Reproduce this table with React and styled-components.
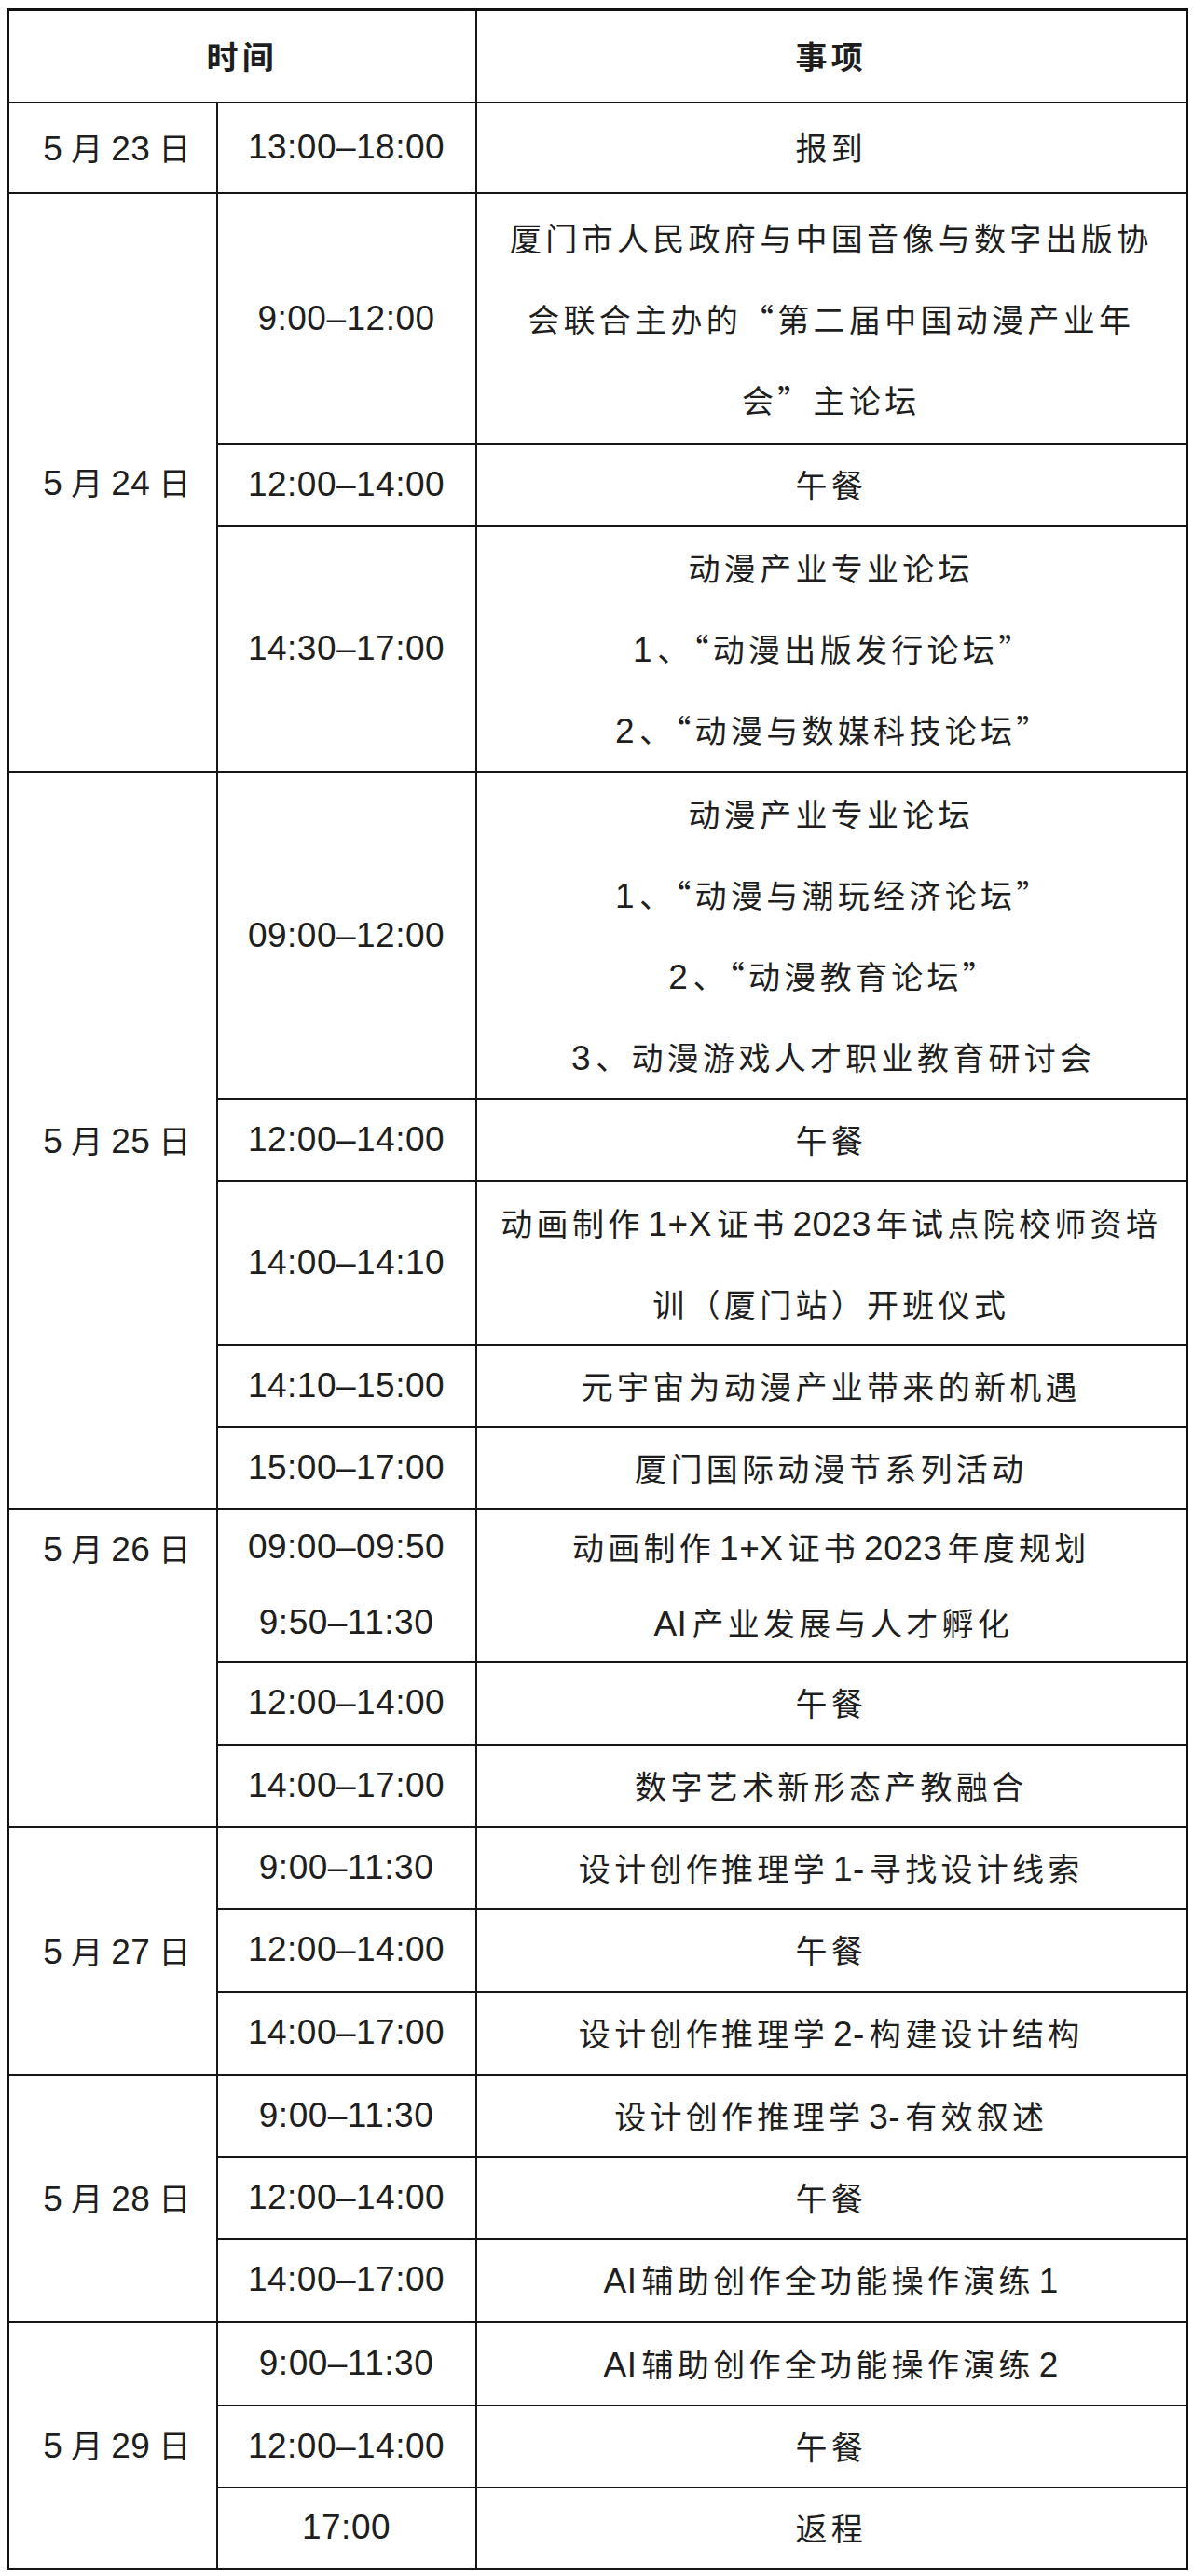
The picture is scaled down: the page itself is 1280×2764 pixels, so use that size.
import React from "react";
import styled, { createGlobalStyle, css } from "styled-components";

const GlobalStyle = createGlobalStyle`
  html, body {
    margin: 0;
    background: #fff;
  }
  body {
    font-family: "Noto Sans CJK SC", "Liberation Sans", sans-serif;
    color: #1e1e1e;
  }
`;

const Page = styled.div`
  padding: 9px 5px 6px 7px;
`;

const Schedule = styled.table`
  width: 1268px;
  table-layout: fixed;
  border-collapse: collapse;
  border: 3px solid #111;
`;

const cellBase = css`
  border: 2px solid #161616;
  padding: 0;
  text-align: center;
  vertical-align: middle;
  font-size: 34px;
  font-weight: 400;
  letter-spacing: 4.3px;
  line-height: 86px;
`;

const HeadCell = styled.th`
  ${cellBase}
  font-weight: 700;
`;

const DateCell = styled.td`
  ${cellBase}
  letter-spacing: 0;
  vertical-align: ${p => (p.$top ? "top" : "middle")};
  line-height: ${p => (p.$top ? "82px" : "86px")};
`;

const TimeCell = styled.td`
  ${cellBase}
  font-family: "Liberation Sans", Arial, sans-serif;
  font-size: 37px;
  letter-spacing: 0.5px;
  line-height: ${p => p.$lh}px;
  ${p => p.$open && "border-bottom-style: hidden;"}
`;

const TextCell = styled.td`
  ${cellBase}
  line-height: ${p => p.$lh}px;
  ${p => p.$open && "border-bottom-style: hidden;"}
`;

const Row = styled.tr`
  height: ${p => p.$h}px;
`;

const Line = styled.div`
  white-space: nowrap;
`;

const Latin = styled.span`
  font-family: "Liberation Sans", Arial, sans-serif;
  font-size: 37px;
  line-height: 1;
  letter-spacing: 0.5px;
  margin: 0 ${p => p.$gap}px;
`;

// wrap runs of latin letters / digits so they get the narrower western face
const mix = (text, gap = 5) =>
  text.split(/([0-9A-Za-z+\-]+)/).map((part, i) =>
    i % 2 ? <Latin key={i} $gap={gap}>{part}</Latin> : part
  );

const schedule = [
  {
    date: "5月23日",
    rows: [{ h: 97, time: "13:00–18:00", lines: ["报到"] }],
  },
  {
    date: "5月24日",
    rows: [
      {
        h: 269,
        time: "9:00–12:00",
        lines: [
          "厦门市人民政府与中国音像与数字出版协",
          "会联合主办的“第二届中国动漫产业年",
          "会”主论坛",
        ],
      },
      { h: 88, time: "12:00–14:00", lines: ["午餐"] },
      {
        h: 264,
        time: "14:30–17:00",
        lines: ["动漫产业专业论坛", "1、“动漫出版发行论坛”", "2、“动漫与数媒科技论坛”"],
      },
    ],
  },
  {
    date: "5月25日",
    rows: [
      {
        h: 351,
        time: "09:00–12:00",
        lines: [
          "动漫产业专业论坛",
          "1、“动漫与潮玩经济论坛”",
          "2、“动漫教育论坛”",
          "3、动漫游戏人才职业教育研讨会",
        ],
      },
      { h: 88, time: "12:00–14:00", lines: ["午餐"] },
      {
        h: 176,
        time: "14:00–14:10",
        lines: ["动画制作1+X证书2023年试点院校师资培", "训（厦门站）开班仪式"],
      },
      { h: 88, time: "14:10–15:00", lines: ["元宇宙为动漫产业带来的新机遇"] },
      { h: 88, time: "15:00–17:00", lines: ["厦门国际动漫节系列活动"] },
    ],
  },
  {
    date: "5月26日",
    top: true,
    rows: [
      { h: 82, open: true, time: "09:00–09:50", lines: ["动画制作1+X证书2023年度规划"] },
      { h: 82, time: "9:50–11:30", lines: ["AI产业发展与人才孵化"] },
      { h: 89, time: "12:00–14:00", lines: ["午餐"] },
      { h: 88, time: "14:00–17:00", lines: ["数字艺术新形态产教融合"] },
    ],
  },
  {
    date: "5月27日",
    rows: [
      { h: 88, time: "9:00–11:30", lines: ["设计创作推理学1-寻找设计线索"] },
      { h: 89, time: "12:00–14:00", lines: ["午餐"] },
      { h: 89, time: "14:00–17:00", lines: ["设计创作推理学2-构建设计结构"] },
    ],
  },
  {
    date: "5月28日",
    rows: [
      { h: 88, time: "9:00–11:30", lines: ["设计创作推理学3-有效叙述"] },
      { h: 88, time: "12:00–14:00", lines: ["午餐"] },
      { h: 89, time: "14:00–17:00", lines: ["AI辅助创作全功能操作演练1"] },
    ],
  },
  {
    date: "5月29日",
    rows: [
      { h: 90, time: "9:00–11:30", lines: ["AI辅助创作全功能操作演练2"] },
      { h: 88, time: "12:00–14:00", lines: ["午餐"] },
      { h: 88, time: "17:00", lines: ["返程"] },
    ],
  },
];

export default function App() {
  return (
    <Page>
      <GlobalStyle />
      <Schedule lang="zh-CN">
        <colgroup>
          <col style={{ width: 224 }} />
          <col style={{ width: 278 }} />
          <col />
        </colgroup>
        <thead>
          <Row $h={99}>
            <HeadCell colSpan={2}>时间</HeadCell>
            <HeadCell>事项</HeadCell>
          </Row>
        </thead>
        <tbody>
          {schedule.map(day =>
            day.rows.map((row, i) => {
              const lh = row.lines.length > 1 ? 87 : row.h < 86 ? 80 : 84;
              return (
                <Row key={day.date + row.time} $h={row.h}>
                  {i === 0 && (
                    <DateCell rowSpan={day.rows.length} $top={day.top}>
                      {mix(day.date, 9)}
                    </DateCell>
                  )}
                  <TimeCell $lh={lh} $open={row.open}>{row.time}</TimeCell>
                  <TextCell $lh={lh} $open={row.open}>
                    {row.lines.map(line => (
                      <Line key={line}>{mix(line)}</Line>
                    ))}
                  </TextCell>
                </Row>
              );
            })
          )}
        </tbody>
      </Schedule>
    </Page>
  );
}
